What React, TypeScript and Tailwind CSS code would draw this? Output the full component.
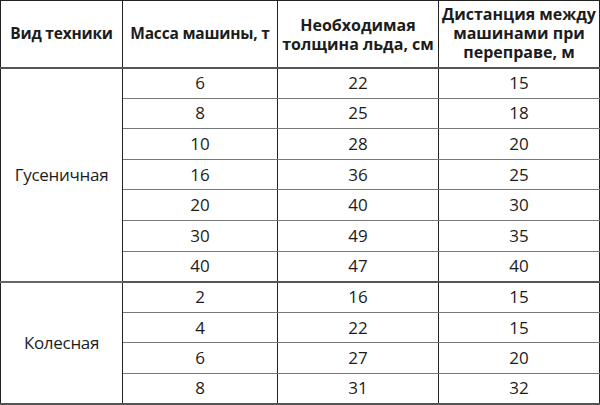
import React from "react";

const tracked = [
  ["6", "22", "15"],
  ["8", "25", "18"],
  ["10", "28", "20"],
  ["16", "36", "25"],
  ["20", "40", "30"],
  ["30", "49", "35"],
  ["40", "47", "40"],
];
const wheeled = [
  ["2", "16", "15"],
  ["4", "22", "15"],
  ["6", "27", "20"],
  ["8", "31", "32"],
];

function Group({ name, rows, last }: { name: string; rows: string[][]; last?: boolean }) {
  return (
    <>
      {rows.map((r, i) => (
        <tr key={i} className="h-[30.6px]">
          {i === 0 && (
            <td
              rowSpan={rows.length}
              className={`border-l-[1.5px] border-r-[1.5px] border-[#222] ${last ? "border-b-2 border-b-[#555]" : "border-b-2 border-b-[#666]"} text-center align-middle tracking-[-0.3px]`}
            >
              {name}
            </td>
          )}
          {r.map((c, j) => (
            <td
              key={j}
              className={`text-center align-middle p-0 border-r-[1.5px] border-r-[#222] ${i === rows.length - 1 ? "border-b-2 border-b-[#555]" : "border-b-[1.5px] border-b-[#777]"}`}
            >
              {c}
            </td>
          ))}
        </tr>
      ))}
    </>
  );
}

export default function App() {
  return (
    <div
      className="w-[600px] h-[405px] bg-white overflow-hidden text-[#1c1c1c]"
      style={{ fontFamily: '"Open Sans", "Noto Sans", sans-serif' }}
    >
      <table className="w-[599px] border-collapse table-fixed text-[17px] leading-[20px]">
        <colgroup>
          <col className="w-[122px]" />
          <col className="w-[155px]" />
          <col className="w-[161px]" />
          <col className="w-[161px]" />
        </colgroup>
        <thead>
          <tr className="h-[67px]">
            <th className="border-[1.5px] border-[#222] border-b-2 border-b-[#555] font-bold text-[15.5px] leading-[19px] text-center align-middle px-0 tracking-[-0.2px]">
              Вид техники
            </th>
            <th className="border-[1.5px] border-[#222] border-b-2 border-b-[#555] font-bold text-[15.5px] leading-[19px] text-center align-middle px-0 tracking-[-0.2px]">
              Масса машины, т
            </th>
            <th className="border-[1.5px] border-[#222] border-b-2 border-b-[#555] font-bold text-[16px] leading-[19px] text-center align-middle px-0 pt-[2px]">
              Необходимая
              <br />
              толщина льда, см
            </th>
            <th className="border-[1.5px] border-[#222] border-b-2 border-b-[#555] font-bold text-[16px] leading-[19px] text-center align-middle px-0">
              Дистанция между
              <br />
              машинами при
              <br />
              переправе, м
            </th>
          </tr>
        </thead>
        <tbody>
          <Group name="Гусеничная" rows={tracked} />
          <Group name="Колесная" rows={wheeled} last />
        </tbody>
      </table>
    </div>
  );
}
